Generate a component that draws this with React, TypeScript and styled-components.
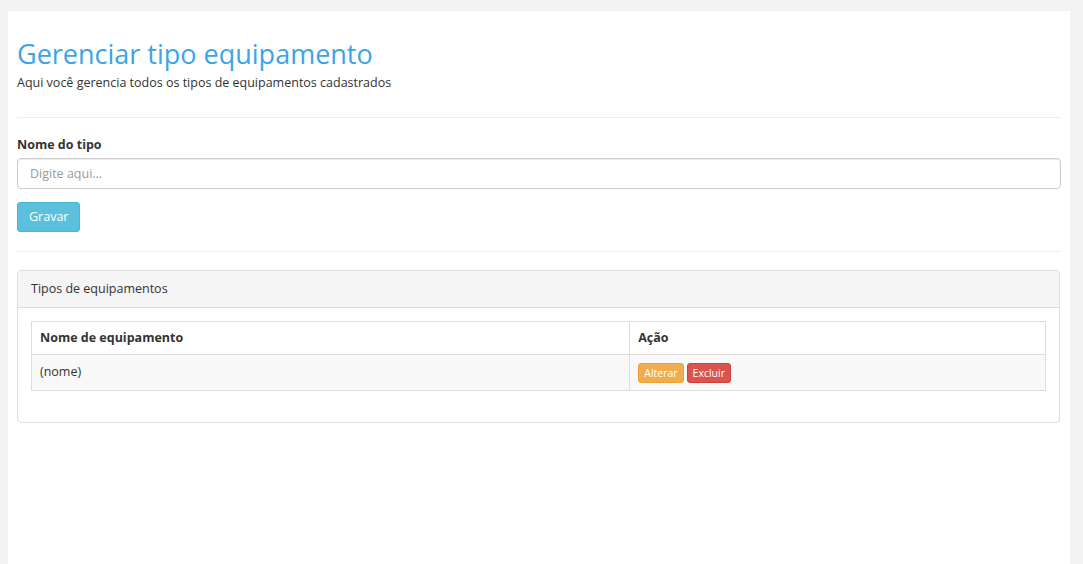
import { createGlobalStyle } from "styled-components";
import styled from "styled-components";

const GlobalStyle = createGlobalStyle`
    html, body {
        margin: 0;
        padding: 0;
        background: #f3f3f3;
        font-family: "Open Sans", "Liberation Sans", sans-serif;
        font-size: 12.5px;
        color: #333;
    }
    * { box-sizing: border-box; }
`;

const Page = styled.div`
    margin: 11px 13px 0 8px;
    min-height: 553px;
    background: #fff;
    padding: 26px 9px 20px 9px;
`;

const Title = styled.h1`
    margin: 0;
    font-size: 27px;
    font-weight: 400;
    line-height: 34px;
    color: #3aa5e9;
`;

const Subtitle = styled.p`
    margin: 3px 0 0 0;
    line-height: 18px;
`;

const Divider = styled.hr<{ $top: number }>`
    border: 0;
    border-top: 1px solid #eee;
    margin: ${(p) => p.$top}px 0 18px 0;
`;

const Label = styled.label`
    display: block;
    font-weight: 700;
    line-height: 18px;
    margin: 0 0 4px 0;
`;

const Input = styled.input`
    display: block;
    width: 100%;
    height: 31px;
    padding: 6px 12px;
    font-family: inherit;
    font-size: 12.5px;
    color: #555;
    border: 1px solid #ccc;
    border-radius: 4px;
    box-shadow: inset 0 1px 1px rgba(0, 0, 0, 0.075);
    &::placeholder {
        color: #999;
    }
`;

const Button = styled.button<{ $bg: string; $border: string; $small?: boolean }>`
    display: inline-block;
    font-family: inherit;
    font-size: ${(p) => (p.$small ? "10.5px" : "12.5px")};
    line-height: ${(p) => (p.$small ? "16px" : "18px")};
    padding: ${(p) => (p.$small ? "1px 5px" : "5px 11px")};
    color: #fff;
    background: ${(p) => p.$bg};
    border: 1px solid ${(p) => p.$border};
    border-radius: 3px;
    cursor: pointer;
`;

const SubmitRow = styled.div`
    margin-top: 13px;
`;

const Panel = styled.div`
    margin: 0 1px 0 0;
    border: 1px solid #ddd;
    border-radius: 4px;
`;

const PanelHeading = styled.div`
    background: #f5f5f5;
    border-bottom: 1px solid #ddd;
    border-radius: 4px 4px 0 0;
    padding: 9px 13px;
    line-height: 18px;
`;

const PanelBody = styled.div`
    padding: 13px 13px 31px 13px;
`;

const Table = styled.table`
    width: 100%;
    border-collapse: collapse;
    border: 1px solid #ddd;
`;

const Th = styled.th<{ $w?: string }>`
    text-align: left;
    font-weight: 700;
    padding: 7px 8px;
    line-height: 18px;
    border: 1px solid #ddd;
    width: ${(p) => p.$w ?? "auto"};
`;

const Row = styled.tr`
    background: #f9f9f9;
`;

const Td = styled.td`
    padding: 8px 8px 7px 8px;
    line-height: 18px;
    border: 1px solid #ddd;
    vertical-align: top;
`;

const Actions = styled.div`
    display: flex;
    gap: 3px;
`;

export default function App() {
    return (
        <>
            <GlobalStyle />
            <Page>
                <Title>Gerenciar tipo equipamento</Title>
                <Subtitle>Aqui você gerencia todos os tipos de equipamentos cadastrados</Subtitle>
                <Divider $top={25} />
                <Label htmlFor="nome">Nome do tipo</Label>
                <Input id="nome" placeholder="Digite aqui..." />
                <SubmitRow>
                    <Button $bg="#5bc0de" $border="#46b8da">Gravar</Button>
                </SubmitRow>
                <Divider $top={19} />
                <Panel>
                    <PanelHeading>Tipos de equipamentos</PanelHeading>
                    <PanelBody>
                        <Table>
                            <thead>
                                <tr>
                                    <Th $w="59%">Nome de equipamento</Th>
                                    <Th>Ação</Th>
                                </tr>
                            </thead>
                            <tbody>
                                <Row>
                                    <Td>(nome)</Td>
                                    <Td>
                                        <Actions>
                                            <Button $small $bg="#f0ad4e" $border="#eea236">Alterar</Button>
                                            <Button $small $bg="#d9534f" $border="#d43f3a">Excluir</Button>
                                        </Actions>
                                    </Td>
                                </Row>
                            </tbody>
                        </Table>
                    </PanelBody>
                </Panel>
            </Page>
        </>
    );
}
